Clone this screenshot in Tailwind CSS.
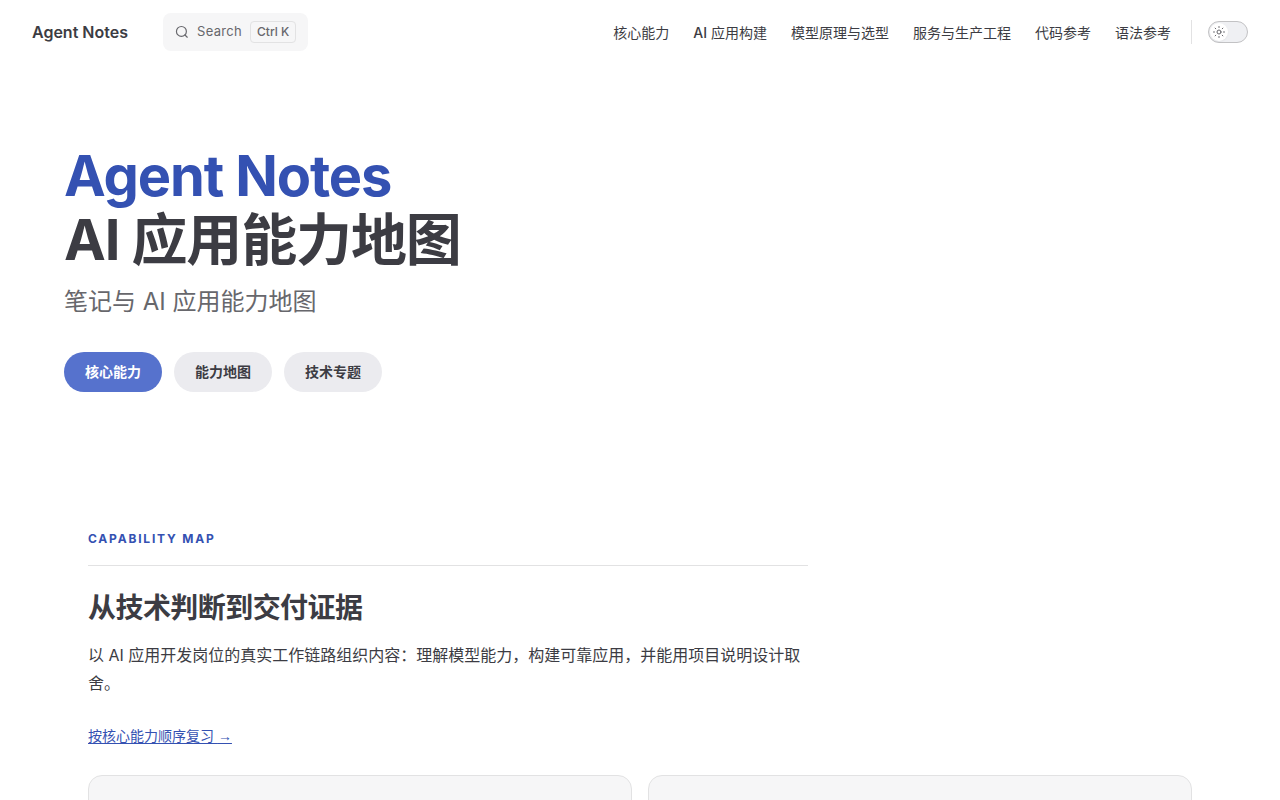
<!DOCTYPE html>
<html lang="zh-CN">
<head>
  <meta charset="UTF-8" />
  <meta name="viewport" content="width=device-width, initial-scale=1" />
  <title>Agent Notes</title>
  <script src="https://cdn.jsdelivr.net/npm/@tailwindcss/browser@4"></script>
</head>

<body class="bg-white text-[#3c3c43] font-[Inter,'Noto_Sans_CJK_SC',sans-serif] overflow-x-hidden">
  <!-- Nav -->
  <header class="flex items-center h-16 px-8">
    <a href="#" class="text-base font-semibold">Agent Notes</a>
    <button type="button" class="flex items-center ml-[35px] h-[38px] px-3 gap-2 rounded-lg bg-[#f6f6f7] text-[#67676c]">
      <svg class="size-3.5" viewBox="0 0 24 24" fill="none" stroke="currentColor" stroke-width="2" stroke-linecap="round" stroke-linejoin="round">
        <circle cx="11" cy="11" r="8.5" />
        <path d="m21 21-3.9-3.9" />
      </svg>
      <span class="text-[13px] tracking-wide">Search</span>
      <kbd class="flex items-center h-[22px] px-1.5 rounded border border-[#e2e2e3] font-[Inter,sans-serif] text-xs font-medium">Ctrl K</kbd>
    </button>

    <div class="flex items-center ml-auto">
      <nav class="flex items-center gap-6 pt-px text-sm whitespace-nowrap">
        <a href="#">核心能力</a>
        <a href="#"><span class="font-medium">AI</span> 应用构建</a>
        <a href="#">模型原理与选型</a>
        <a href="#">服务与生产工程</a>
        <a href="#">代码参考</a>
        <a href="#">语法参考</a>
      </nav>
      <div class="w-px h-6 ml-5 mr-4 bg-[#e2e2e3]"></div>
      <button type="button" role="switch" aria-checked="false" aria-label="Switch to dark theme"
              class="flex items-center w-10 h-[22px] rounded-full border border-[#c2c2c4] bg-[#eff0f3]">
        <span class="flex items-center justify-center ml-px size-[18px] rounded-full bg-white shadow-xs text-[#67676c]">
          <svg class="size-3" viewBox="0 0 24 24" fill="none" stroke="currentColor" stroke-width="2" stroke-linecap="round">
            <circle cx="12" cy="12" r="4" />
            <path d="M12 1v2M12 21v2M4.2 4.2l1.4 1.4M18.4 18.4l1.4 1.4M1 12h2M21 12h2M4.2 19.8l1.4-1.4M18.4 5.6l1.4-1.4" />
          </svg>
        </span>
      </button>
    </div>
  </header>

  <main>
    <!-- Hero -->
    <section class="max-w-6xl mx-auto pt-20 pb-16">
      <h1 class="text-[56px] leading-16 font-bold tracking-[-0.02em]">
        <span class="block text-[#3451b2]">Agent Notes</span>
        <span class="block">AI 应用能力地图</span>
      </h1>
      <p class="pt-3 text-2xl leading-9 text-[#67676c]">笔记与 AI 应用能力地图</p>
      <div class="flex gap-3 pt-8 text-sm font-semibold">
        <a href="#" class="px-[21px] leading-10 rounded-full bg-[#5672cd] text-white">核心能力</a>
        <a href="#" class="px-[21px] leading-10 rounded-full bg-[#ebebef]">能力地图</a>
        <a href="#" class="px-[21px] leading-10 rounded-full bg-[#ebebef]">技术专题</a>
      </div>
    </section>

    <!-- Capability map -->
    <section class="max-w-6xl mx-auto px-6 pt-[71px]">
      <div class="max-w-[720px]">
        <p class="text-xs leading-6 font-bold tracking-[0.15em] text-[#3451b2]">CAPABILITY MAP</p>
        <h2 class="mt-3.5 pt-6 border-t border-[#e2e2e3] text-[28px] leading-9 font-semibold tracking-[-0.02em]">从技术判断到交付证据</h2>
        <p class="mt-[15px] text-base leading-7">以 AI 应用开发岗位的真实工作链路组织内容：理解模型能力，构建可靠应用，并能用项目说明设计取舍。</p>
        <p class="mt-[25px] text-sm leading-7"><a href="#" class="text-[#3451b2] underline underline-offset-2">按核心能力顺序复习 <span class="font-['Liberation_Sans',sans-serif]">→</span></a></p>
      </div>
      <div class="grid grid-cols-2 gap-4 mt-[25px]">
        <div class="h-48 rounded-[14px] border border-[#e2e2e3] bg-[#f6f6f7]"></div>
        <div class="h-48 rounded-[14px] border border-[#e2e2e3] bg-[#f6f6f7]"></div>
      </div>
    </section>
  </main>
</body>
</html>
